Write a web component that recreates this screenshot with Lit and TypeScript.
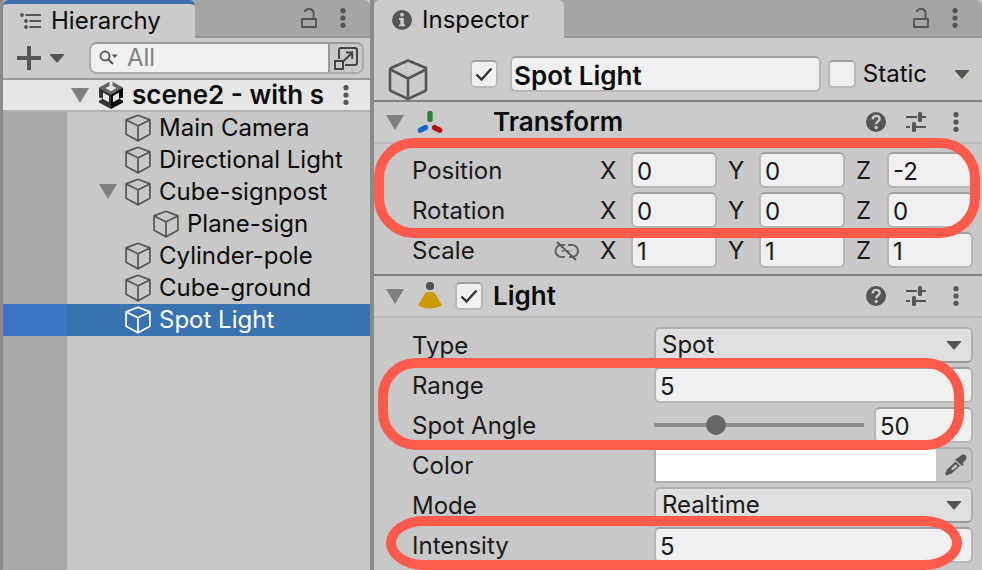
import { LitElement, html, svg, css, nothing } from "lit";
import { customElement, state } from "lit/decorators.js";
import { classMap } from "lit/directives/class-map.js";
import { styleMap } from "lit/directives/style-map.js";

interface Node {
  name: string;
  depth: number;
  open?: boolean;
}

const NODES: Node[] = [
  { name: "Main Camera", depth: 0 },
  { name: "Directional Light", depth: 0 },
  { name: "Cube-signpost", depth: 0, open: true },
  { name: "Plane-sign", depth: 1 },
  { name: "Cylinder-pole", depth: 0 },
  { name: "Cube-ground", depth: 0 },
  { name: "Spot Light", depth: 0 },
];

const icon = (w: number, h: number, body: unknown) =>
  html`<svg width=${w} height=${h} viewBox="0 0 ${w} ${h}" aria-hidden="true">${body}</svg>`;

const cube = () =>
  icon(26, 28, svg`<path d="M13 1.2 24.9 5.9V20.3L13 26.8 1.1 20.3V5.9ZM1.1 5.9 13 11.8 24.9 5.9M13 11.8V26.8" fill="none" stroke="currentColor" stroke-width="1.7" stroke-linejoin="round"/>`);
const bigCube = () =>
  icon(40, 41, svg`<path d="M20 1.5 38 9V30.5Q38 31.5 37 32L20 40 3 32Q2 31.5 2 30.5V11Q2 9.5 3 9ZM2.5 10.5 20 19.5 38 10.5M20 19.5V40" fill="none" stroke="currentColor" stroke-width="2.6" stroke-linejoin="round"/>`);
const dots = () =>
  icon(6, 20, svg`<g fill="currentColor"><circle cx="3" cy="2.7" r="2.6"/><circle cx="3" cy="10" r="2.6"/><circle cx="3" cy="17.3" r="2.6"/></g>`);
const lock = () =>
  icon(16, 20, svg`<path d="M1 11H15V19H1ZM3.5 3.8C4.5 1.8 6 1 8 1 11 1 12.6 3 12.6 5.5V11" fill="none" stroke="currentColor" stroke-width="1.9" stroke-linejoin="round"/>`);
const fold = () => icon(18, 15, svg`<path d="M0 0H18L9 15Z" fill="#808080"/>`);
const caret = () => icon(14, 9, svg`<path d="M0 0H14V1L7 9 0 1Z" fill="#555550"/>`);
const tick = () =>
  icon(28, 28, svg`<path d="M6.5 14.5 11.5 19.5 21.5 8.5" fill="none" stroke="#333" stroke-width="2.4"/>`);
const list = () =>
  icon(22, 16, svg`<g fill="#555"><circle cx="2" cy="2" r="1.9"/><circle cx="6" cy="8" r="1.9"/><circle cx="6" cy="14" r="1.9"/><path d="M5.5 1H21V3H5.5ZM9.5 7H21V9H9.5ZM9.5 13H21V15H9.5Z"/></g>`);
const plus = () => icon(24, 24, svg`<path d="M10 0H14V10H24V14H14V24H10V14H0V10H10Z" fill="#555"/>`);
const search = () =>
  icon(20, 16, svg`<circle cx="6" cy="6" r="4.5" fill="none" stroke="#5a5a5a" stroke-width="1.9"/><path d="M9 9.2 14 14" stroke="#5a5a5a" stroke-width="2.2"/><path d="M12.5 4.5H19L15.7 8Z" fill="#5a5a5a"/>`);
const popOut = () =>
  icon(26, 26, svg`<g fill="none" stroke="#444" stroke-width="2"><path d="M6 14V5Q6 3 8 3H22Q24 3 24 5V18Q24 20 22 20H12" /><path d="M2 16H10V24H2ZM10.5 16 19 8M13 7.5H19.2V14"/></g>`);
const unity = () =>
  icon(24, 28, svg`
    <path d="M12 0 24 6.5 12 13.500 0 6.5Z" fill="#666"/>
    <path d="M0 6.5 12 13.5V28L0 21.5Z" fill="#333"/>
    <path d="M24 6.5 12 13.5V28L24 21.5Z" fill="#080808"/>
    <g fill="#e6e6e6">
      <path d="M10.500 0H13.500V5L17.500 7 12 10.2 6.500 7 10.500 5Z"/>
      <path d="M4 11.500 10 15V21.300L6.500 19.300 4 17.900Z"/>
      <path d="M20 11.500 14 15V21.300L17.500 19.300 20 17.900Z"/>
      <path d="M0 16.500 4 17.500 0 19.700ZM24 16.500 20 17.500 24 19.700Z"/>
    </g>`);
const info = () =>
  icon(20, 20, svg`<circle cx="10" cy="10" r="10" fill="#555"/><circle cx="10" cy="4.8" r="2" fill="#cbcbcb"/><path d="M7 8H11.8V14.5H13V16.3H7V14.5H8.3V9.8H7Z" fill="#cbcbcb"/>`);
const help = () =>
  icon(20, 20, svg`<circle cx="10" cy="10" r="10" fill="#555"/><path d="M6.7 7.5C6.7 5.2 8 3.9 10.2 3.9S13.6 5.2 13.6 7C13.6 9.3 10.2 9.5 10.2 12.2" fill="none" stroke="#cbcbcb" stroke-width="2.3"/><circle cx="10.2" cy="15.5" r="1.7" fill="#cbcbcb"/>`);
const sliders = () =>
  icon(20, 20, svg`<g fill="#555"><path d="M0 4H11V6H0ZM15 4H20V6H15ZM0 14H4V16H0ZM9 14H20V16H9Z"/><rect x="12" y="0" width="4" height="10" rx="1.5"/><rect x="6" y="10" width="4" height="10" rx="1.5"/></g>`);
const axes = () =>
  icon(26, 24, svg`<g stroke-linecap="round" stroke-width="5.4"><path d="M13 3.5V9.5" stroke="#2f8437"/><path d="M3.4 20.2 8.4 17.6" stroke="#1268d0"/><path d="M22.6 20.2 17.6 17.6" stroke="#b31313"/></g>`);
const lamp = () =>
  icon(26, 28, svg`<rect x="9" y="0" width="8" height="8" rx="3.5" fill="#555"/><path d="M8.5 10.5Q13 9 17.500 10.5L25 23.5Q13 29.5 1 23.5Z" fill="#cc9900"/>`);
const unlink = () =>
  icon(26, 20, svg`<g fill="none" stroke="#666" stroke-width="2.2"><path d="M11 4H7.5A5.5 5.5 0 0 0 7.5 16H11M14 4H18A5.5 5.5 0 0 1 18 16H15"/><path d="M7.5 10H18" stroke-width="1.5" stroke-dasharray="3 2"/><path d="M3 1 22 19" stroke="#555" stroke-width="1.8"/></g>`);
const dropper = () =>
  icon(22, 22, svg`<path d="M12 4.5 14 3 17 0.8Q20 -.2 21 1.5 22 3.5 20.5 6L18 8.5 18.5 10.5 17 12 10 5.5Z" fill="#555"/><path d="M10.5 7.5 15 12 6.5 19.5 1.5 21.5 0 20 2 15.5Z" fill="#555"/><path d="M10.5 10.2 12.5 12.2 8 16.2 6 15Z" fill="#c8c8c8"/>`);

@customElement("app-root")
export class AppRoot extends LitElement {
  @state() private selected = 6;
  @state() private angle = 50;

  static styles = css`
    :host {
      display: grid;
      grid-template-columns: minmax(0, 367fr) minmax(0, 608fr);
      gap: 4px;
      box-sizing: border-box;
      height: 100vh;
      padding-left: 3px;
      overflow: hidden;
      background: #8a8a8a;
      color: #0c0c0c;
      font: 24px/32px Inter, sans-serif;
    }
    * { box-sizing: border-box; }
    svg { display: block; flex: none; }
    button, input, select { font: inherit; color: inherit; margin: 0; }
    button { display: grid; place-items: center; padding: 0; border: 0; background: none; color: #555; }
    .panel { display: flex; flex-direction: column; min-width: 0; overflow: hidden; background: #c8c8c8; }
    .tabs {
      display: flex; flex: none; height: 38px; background: #a5a5a5;
      box-shadow: inset 0 -2px #999; border-radius: 0 6px 0 0;
    }
    .tab {
      display: flex; align-items: center; gap: 10px; height: 38px;
      border-radius: 6px 6px 0 0; background: #cbcbcb; color: inherit; overflow: hidden;
    }
    .tab.tree-tab { width: 192px; padding: 0 0 0 17px; gap: 9px; border-top: 4px solid #3a72b0; }
    .tab.info-tab { width: 190px; padding: 2px 0 0 18px; }
    .tools { display: flex; align-items: center; gap: 23px; margin-left: auto; padding: 0 24px 2px 0; color: #555; }

    .toolbar {
      display: flex; flex: none; align-items: center; height: 42px; padding: 0 6px 0 14px;
      border-bottom: 2px solid #999; background: #cbcbcb;
    }
    .add { grid-auto-flow: column; gap: 9px; margin-right: 25px; }
    .search {
      display: flex; flex: 1; min-width: 0; height: 32px; align-items: stretch;
      border: 2px solid #aaa; border-top-color: #999; border-radius: 8px; background: #f0f0f0; overflow: hidden;
    }
    .search label { display: flex; flex: 1; min-width: 0; align-items: center; gap: 8px; padding-left: 8px; }
    .search input { flex: 1; min-width: 0; border: 0; padding: 0; background: none; outline: 0; }
    .search input::placeholder { color: #808080; opacity: 1; }
    .search button { width: 34px; border-left: 2px solid #999; background: #c8c8c8; }

    .scene {
      display: flex; flex: none; align-items: center; height: 32px; padding: 0 21px 0 68px;
      border-bottom: 2px solid #b0b0b0; background: #e6e6e6; color: #555;
    }
    .scene-icon { margin: 0 9px 0 10px; }
    .scene-name { flex: 1; min-width: 0; margin-right: 10px; overflow: hidden; white-space: nowrap; }
    .strong { color: #0c0c0c; font-size: 26px; font-weight: 600; font-optical-sizing: none; }
    .tree {
      flex: 1; margin: 0; padding: 0; list-style: none;
      background: linear-gradient(to right, #a9a9a9 64px, #c8c8c8 64px);
    }
    .node {
      display: flex; align-items: center; width: 100%; height: 32px; gap: 8px; padding-bottom: 1px; white-space: nowrap;
    }
    .node span { color: #0c0c0c; }
    .slot { display: block; width: 18px; }
    .node.on { background: linear-gradient(to right, #3d74c4 64px, #3a72b0 64px); color: #fff; }
    .node.on span { color: #fff; }

    .object { display: flex; flex: none; height: 64px; padding: 18px 13px 0 14px; border-bottom: 2px solid #808080; background: #cbcbcb; color: #555; }
    .object-icon { align-self: flex-end; }
    .object-line { display: flex; flex: 1; align-items: center; min-width: 0; height: 36px; padding-left: 42px; color: #0c0c0c; }
    .object-line .field { flex: 1; margin: 0 7px 0 12px; padding-left: 2px; }
    .static { display: flex; align-items: center; gap: 7px; margin-right: 28px; }
    .check { display: grid; flex: none; width: 28px; height: 28px; }
    .check > * { grid-area: 1 / 1; }
    .check svg { visibility: hidden; pointer-events: none; }
    .check input:checked + svg { visibility: visible; }
    .check input {
      appearance: none; width: 28px; height: 28px; border: 2px solid #b8b8b8;
      border-top-color: #a0a0a0; border-radius: 5px; background: #f0f0f0;
    }
    .field {
      width: 100%; min-width: 0; height: 36px; padding: 2px 4px 0; border: 2px solid #b7b7b7;
      border-top-color: #a0a0a0; border-radius: 6px; background: #f0f0f0; outline: 0;
    }

    .head { display: flex; flex: none; align-items: center; height: 42px; padding: 0 23px 0 12px; border-bottom: 2px solid #b9b9b9; background: #cbcbcb; color: #555; }
    .head h2 { margin: 0; }
    .kind { display: flex; align-items: center; justify-content: space-between; width: 66px; margin: 0 10px 0 13px; }
    .actions { display: flex; gap: 20px; margin-left: auto; }
    .actions button:last-child { padding-left: 7px; }
    .body { display: flex; flex: none; flex-direction: column; gap: 4px; padding: 8px 0 6px; color: #1a1a1a; }
    .light { padding-top: 9px; }
    .split { border-bottom: 2px solid #808080; }
    .row { display: flex; align-items: center; height: 36px; padding: 0 9px 0 38px; }
    .name { display: flex; flex: none; align-items: center; justify-content: space-between; width: 242px; padding-top: 2px; }
    .vec-name { width: 188px; padding-right: 20px; }
    .vector { display: grid; flex: 1; grid-template-columns: repeat(3, minmax(0, 1fr)); gap: 11px; min-width: 0; }
    .axis { display: grid; grid-template-columns: 31px minmax(0, 1fr); align-items: center; }
    .axis span { padding-top: 2px; }
    .pick { display: grid; flex: 1; align-items: center; min-width: 0; }
    .pick > * { grid-area: 1 / 1; }
    .pick svg { justify-self: end; margin-right: 12px; pointer-events: none; }
    .pick select {
      appearance: none; width: 100%; height: 36px; padding: 0 6px; border: 2px solid #b0b0b0;
      border-bottom-color: #999; border-radius: 6px; background: #dfdfdf;
    }
    .value { display: flex; flex: 1; align-items: center; gap: 10px; min-width: 0; }
    .amount { width: 99px; flex: none; }
    .slider { appearance: none; flex: 1; min-width: 0; height: 20px; background: none; }
    .slider::-webkit-slider-runnable-track { height: 4px; background: #8f8f8f; }
    .slider::-webkit-slider-thumb { appearance: none; width: 20px; height: 20px; margin-top: -8px; border-radius: 50%; background: #666; }
    .colour { display: flex; flex: 1; height: 36px; min-width: 0; border: 2px solid #b0b0b0; border-radius: 0 6px 6px 0; overflow: hidden; }
    .colour input { appearance: none; flex: 1; min-width: 0; height: 32px; padding: 0; border: 0; background: #fff; }
    .colour input::-webkit-color-swatch-wrapper { padding: 0; }
    .colour input::-webkit-color-swatch { border: 0; }
    .colour button { width: 35px; padding-left: 4px; }

    .marked { position: relative; display: flex; flex-direction: column; gap: 4px; }
    .ring { position: absolute; z-index: 1; border: 10px solid #ff5a4c; pointer-events: none; }
    .ring-pose { inset: -14px 2px -10px 0; border-radius: 40px; }
    .ring-range { inset: -9px 18px -7px 4px; border-radius: 38px; }
    .ring-power { inset: -11px 20px -7px 12px; border-radius: 38px / 27px; }
  `;

  private check(label: string, on: boolean) {
    return html`<span class="check"><input type="checkbox" aria-label=${label} .checked=${on} />${tick()}</span>`;
  }

  private vector(name: string, values: string[], link = false) {
    return html`<div class="row" role="group" aria-label=${name}>
      <span class="name vec-name">${name}${link ? unlink() : nothing}</span>
      <div class="vector">
        ${["X", "Y", "Z"].map((a, i) => html`<label class="axis"><span>${a}</span><input class="field" .value=${values[i]} /></label>`)}
      </div>
    </div>`;
  }

  private number(id: string, name: string, value: string) {
    return html`<div class="row"><label class="name" for=${id}>${name}</label><input class="field" id=${id} .value=${value} /></div>`;
  }

  private choice(id: string, name: string, options: string[]) {
    return html`<div class="row"><label class="name" for=${id}>${name}</label>
      <span class="pick"><select id=${id}>${options.map((o) => html`<option>${o}</option>`)}</select>${caret()}</span></div>`;
  }

  private actions(name: string) {
    return html`<div class="actions">
      <button aria-label="${name} help">${help()}</button>
      <button aria-label="${name} presets">${sliders()}</button>
      <button aria-label="${name} menu">${dots()}</button>
    </div>`;
  }

  private tools(name: string) {
    return html`<div class="tools"><button aria-label="Lock ${name}">${lock()}</button><button aria-label="${name} menu">${dots()}</button></div>`;
  }

  private hierarchy() {
    return html`<aside class="panel">
      <div class="tabs"><button class="tab tree-tab">${list()}Hierarchy</button>${this.tools("Hierarchy")}</div>
      <div class="toolbar">
        <button class="add" aria-label="Create">${plus()}${caret()}</button>
        <div class="search">
          <label>${search()}<input placeholder="All" aria-label="Search" /></label>
          <button aria-label="Open search window">${popOut()}</button>
        </div>
      </div>
      <div class="scene">
        <button aria-label="Collapse scene">${fold()}</button>
        <span class="scene-icon">${unity()}</span>
        <span class="scene-name strong">scene2 - with s</span>
        <button aria-label="Scene menu">${dots()}</button>
      </div>
      <ul class="tree">
        ${NODES.map((n, i) => html`<li>
          <button
            class=${classMap({ node: true, on: i === this.selected })}
            style=${styleMap({ paddingLeft: `${96 + n.depth * 28}px` })}
            @click=${() => (this.selected = i)}
          ><i class="slot">${n.open ? fold() : nothing}</i>${cube()}<span>${n.name}</span></button>
        </li>`)}
      </ul>
    </aside>`;
  }

  private inspector() {
    return html`<main class="panel">
      <div class="tabs"><button class="tab info-tab">${info()}Inspector</button>${this.tools("Inspector")}</div>
      <div class="object">
        <span class="object-icon">${bigCube()}</span>
        <div class="object-line">
          ${this.check("Active", true)}
          <input class="field strong" aria-label="Name" .value=${NODES[this.selected].name} />
          <label class="static">${this.check("Static", false)}Static</label>
          <button aria-label="Static options">${caret()}</button>
        </div>
      </div>
      <section>
        <div class="head">
          <button aria-label="Collapse Transform">${fold()}</button>
          <span class="kind">${axes()}</span>
          <h2 class="strong">Transform</h2>${this.actions("Transform")}
        </div>
        <div class="body split">
          <div class="marked">
            ${this.vector("Position", ["0", "0", "-2"])}${this.vector("Rotation", ["0", "0", "0"])}
            <div class="ring ring-pose"></div>
          </div>
          ${this.vector("Scale", ["1", "1", "1"], true)}
        </div>
      </section>
      <section>
        <div class="head">
          <button aria-label="Collapse Light">${fold()}</button>
          <span class="kind">${lamp()}${this.check("Light enabled", true)}</span>
          <h2 class="strong">Light</h2>${this.actions("Light")}
        </div>
        <div class="body light">
          ${this.choice("type", "Type", ["Spot", "Directional", "Point"])}
          <div class="marked">
            ${this.number("range", "Range", "5")}
            <div class="row">
              <label class="name" for="angle">Spot Angle</label>
              <div class="value">
                <input class="slider" id="angle" type="range" min="1" max="179" .value=${String(this.angle)}
                  @input=${(e: Event) => (this.angle = Number((e.target as HTMLInputElement).value))} />
                <input class="field amount" aria-label="Spot angle value" .value=${String(this.angle)} />
              </div>
            </div>
            <div class="ring ring-range"></div>
          </div>
          <div class="row">
            <label class="name" for="colour">Color</label>
            <div class="colour"><input type="color" id="colour" value="#ffffff" /><button aria-label="Pick color">${dropper()}</button></div>
          </div>
          ${this.choice("mode", "Mode", ["Realtime", "Mixed", "Baked"])}
          <div class="marked">${this.number("intensity", "Intensity", "5")}<div class="ring ring-power"></div></div>
        </div>
      </section>
    </main>`;
  }

  render() {
    return html`${this.hierarchy()}${this.inspector()}`;
  }
}
